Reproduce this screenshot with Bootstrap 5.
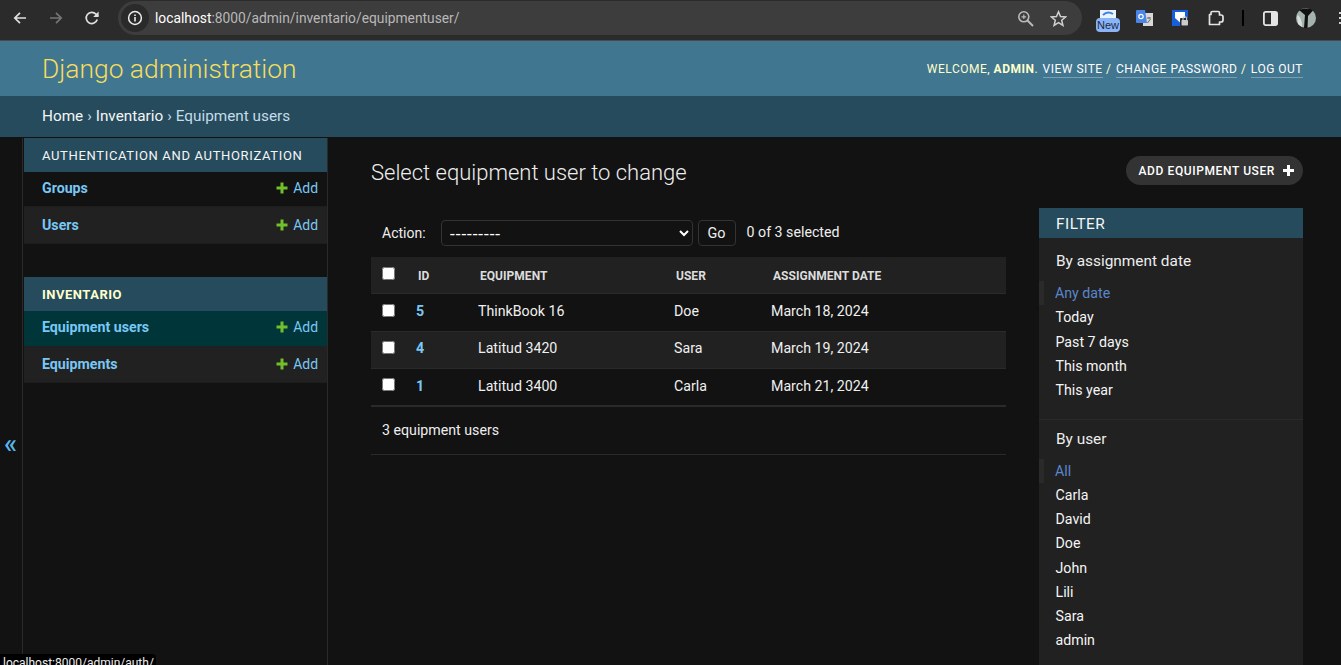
<!doctype html>
<html lang="en">
<head>
<meta charset="utf-8">
<meta name="viewport" content="width=device-width, initial-scale=1">
<title>Select equipment user to change | Django site admin</title>
<link href="https://cdn.jsdelivr.net/npm/bootstrap@5.3.2/dist/css/bootstrap.min.css" rel="stylesheet">
<style>
html, body { height: 665px; overflow: hidden; }
body { background: #121212; color: #eee; font-family: Roboto, "Liberation Sans", sans-serif; font-size: 14.2px; position: relative; }
a { text-decoration: none; }

/* browser bar */
.chrome-bar { height: 41px; background: #2b2b2b; border-bottom: 1px solid #4a4a4a; padding: 0 0 4px 2px; }
.chrome-btn { width: 36px; flex: none; }
.chrome-url { width: 964px; height: 34px; margin-left: 8px; background: #3d3d3d; border-radius: 17px; padding: 0 15px 0 3px; font-size: 13.8px; color: #b8b8b8; flex: none; }
.chrome-info { width: 28px; height: 28px; border-radius: 50%; background: #2a2a2a; margin-right: 6px; }
.chrome-host { color: #fff; }
.chrome-ext { margin-left: 8px; }
.ext-slot { width: 36px; flex: none; }
.ext-new { margin-top: 6px; }
.ext-sep { width: 18px; flex: none; }
.ext-dots { width: 17px; flex: none; }

/* django header */
.dj-header { height: 55px; background: #417690; padding: 1px 38px 0 42px; }
.dj-brand { font-size: 26.4px; font-weight: 300; color: #f5dd5d; line-height: 1; }
.dj-tools { font-size: 12px; font-weight: 400; letter-spacing: .5px; color: #ffc; text-transform: uppercase; margin-top: -1px; }
.dj-tools strong { font-weight: 700; }
.dj-tools a { color: #fff; border-bottom: 1px solid rgba(255,255,255,.3); padding-bottom: 1px; margin-left: 1px; }
.dj-crumbs { height: 41px; background: #264b5d; padding: 0 42px; font-size: 15.3px; color: #c4dce8; }
.dj-crumbs a { color: #f5f5f5; }

/* sidebar */
.dj-main { height: 528px; margin-top: 1px; }
.dj-toggle { width: 23px; flex: none; border-right: 1px solid #2a2a2a; color: #58b6ee; font-size: 27px; font-weight: 500; line-height: 1; padding-top: 293px; padding-left: 4px; }
.dj-side { width: 305px; flex: none; padding-left: 1px; border-right: 1px solid #2a2a2a; }
.dj-module { margin-bottom: 33px; }
.dj-caption { height: 34px; background: #264b5d; padding: 1px 18px 0; font-size: 13px; letter-spacing: .66px; color: #f5f5f5; text-transform: uppercase; font-weight: 400; }
.dj-caption.is-current { color: #ffc; font-weight: 700; letter-spacing: .5px; padding-top: 2px; }
.dj-row { height: 37px; padding: 0 9px 0 18px; border-bottom: 1px solid #1d1d1d; }
.dj-row.first { height: 35px; }
.dj-row.alt { background: #212121; }
.dj-row.current { background: #00363a; border-bottom: 0; padding-bottom: 1px; }
.dj-row .dj-model { color: #79c7f5; font-weight: 700; }
.dj-row.alt .dj-model { margin-top: 2px; }
.dj-add { color: #79c7f5; gap: 5px; font-size: 13.92px; margin-left: auto; }
.dj-row.first .dj-add { margin-top: -2px; }

/* content */
.dj-content { flex: 1; padding: 20px 38px 0 43px; min-width: 0; }
.dj-title { font-size: 22px; font-weight: 300; color: #eee; margin: 0; line-height: 30px; }
.dj-addlink { height: 29px; background: #333; border-radius: 15px; padding: 0 9px 0 13px; font-size: 12px; font-weight: 500; letter-spacing: .6px; color: #fff; text-transform: uppercase; gap: 8px; margin-top: -2px; }
.dj-cols { margin-top: 20px; gap: 33px; }
.dj-list { width: 635px; flex: none; }
.dj-actions { height: 49px; padding: 12px 0 11px 11px; }
.dj-actions label { color: #eee; margin-right: 15px; font-size: 14px; }
.dj-select { width: 252px; height: 26px; background: #121212; border: 1px solid #333; border-radius: 4px; color: #fff; font-family: "Liberation Sans", sans-serif; font-size: 17px; padding: 0 4px; }
.dj-go { height: 26px; width: 38px; background: #121212; border: 1px solid #333; border-radius: 4px; color: #eee; font-size: 14.4px; margin-left: 5px; padding: 1px 0 0; }
.dj-count { margin-left: 11px; font-size: 14.2px; color: #eee; }
.dj-table { margin: 0; --bs-table-bg: transparent; --bs-table-color: #f5f5f5; font-size: 14.2px; table-layout: fixed; }
.dj-table > * > tr > * { border-bottom: 1px solid #2a2a2a; padding: 0; vertical-align: middle; background: transparent; color: #f0f0f0; }
.dj-table thead tr { height: 36px; background: #212121; }
.dj-table thead th { font-size: 12px; font-weight: 700; letter-spacing: .03px; text-transform: uppercase; color: #ddd; }
.dj-table tbody tr { height: 38px; }
.dj-table tbody tr.alt { background: #212121; height: 37px; }
.dj-table > tbody > tr.alt > td { padding-bottom: 1px; }
.dj-table tbody tr:last-child > * { border-bottom: 2px solid #2a2a2a; }
.dj-table > thead > tr > .th-pad { padding: 2px 0 0 2px; }
.dj-table a { color: #79c7f5; font-weight: 700; }
.dj-check { width: 13px; height: 13px; margin: 0 0 4px 11px; display: block; }
.dj-table thead .dj-check { margin-bottom: 2px; }
.dj-foot { height: 48px; padding-left: 11px; border-bottom: 1px solid #2a2a2a; color: #eee; }

/* filter */
.dj-filter { width: 264px; flex: none; background: #212121; height: 470px; }
.dj-filter h2 { height: 30px; margin: 0; background: #264b5d; padding: 3px 17px 0; font-size: 15.4px; font-weight: 400; letter-spacing: .5px; color: #f5f5f5; text-transform: uppercase; }
.dj-group { padding: 13px 0 16.7px; border-bottom: 1px solid #2a2a2a; }
.dj-group + .dj-group { padding-top: 9px; border-bottom: 0; }
.dj-group h3 { margin: 0 0 10.3px; padding-left: 17px; font-size: 15.4px; font-weight: 400; line-height: 20px; color: #eee; }
.dj-group + .dj-group h3 { margin-bottom: 10px; }
.dj-group ul { list-style: none; margin: 0; padding: 0; }
.dj-group li { height: 24.2px; line-height: 24.2px; padding-left: 16.5px; }
.dj-group li a { color: #f5f5f5; }
.dj-group li.selected { border-left: 5px solid #2a2a2a; padding-left: 11px; }
.dj-group li.selected a { color: #5a86cc; }

.status-tip { position: absolute; left: 0; bottom: 0; height: 11px; width: 156px; background: #000; border-top-right-radius: 4px; color: #eee; font-size: 12px; line-height: 19px; padding-left: 3px; overflow: hidden; white-space: nowrap; }
</style>
</head>
<body>
<div class="chrome-bar d-flex align-items-center">
  <div class="chrome-btn d-flex justify-content-center"><svg width="16" height="16" viewBox="0 0 16 16"><path d="M14 8H3M8 2.8 2.8 8 8 13.2" fill="none" stroke="#e0e0e0" stroke-width="1.7"/></svg></div>
  <div class="chrome-btn d-flex justify-content-center"><svg width="16" height="16" viewBox="0 0 16 16"><path d="M2 8H13M8 2.8 13.2 8 8 13.2" fill="none" stroke="#757575" stroke-width="1.7"/></svg></div>
  <div class="chrome-btn d-flex justify-content-center"><svg width="16" height="16" viewBox="0 0 16 16"><path d="M13.2 9.5A5.6 5.6 0 1 1 12 4.2L14 6" fill="none" stroke="#e0e0e0" stroke-width="1.7"/><path d="M14.6 1.6V7H9.2z" fill="#e0e0e0"/></svg></div>
  <div class="chrome-url d-flex align-items-center">
    <span class="chrome-info d-flex align-items-center justify-content-center"><svg width="16" height="16" viewBox="0 0 16 16"><circle cx="8" cy="8" r="6.4" fill="none" stroke="#eee" stroke-width="1.5"/><path d="M8 7v4.4M8 4.4v1.5" stroke="#eee" stroke-width="1.6"/></svg></span>
    <span><span class="chrome-host">localhost</span>:8000/admin/inventario/equipmentuser/</span>
    <span class="ms-auto d-flex align-items-center gap-3">
      <svg width="17" height="17" viewBox="0 0 17 17"><circle cx="6.8" cy="6.8" r="5" fill="none" stroke="#bbb" stroke-width="1.6"/><path d="M10.5 10.5 16 16" stroke="#bbb" stroke-width="1.9"/><path d="M4.5 6.8h4.6M6.8 4.5v4.6" stroke="#bbb" stroke-width="1.2"/></svg>
      <svg width="17" height="17" viewBox="0 0 17 17"><path d="M8.5 1.8 10.5 6.6l5.1.4-3.9 3.3 1.2 5-4.4-2.7-4.4 2.7 1.2-5L1.4 7l5.1-.4z" fill="none" stroke="#d0d0d0" stroke-width="1.5"/></svg>
    </span>
  </div>
  <div class="chrome-ext d-flex align-items-center">
    <div class="ext-slot ext-new d-flex justify-content-center"><svg width="24" height="22" viewBox="0 0 24 22"><rect x="4" y="0" width="16" height="9" fill="#eaf2ff"/><path d="M7 5c3-3 7-3 10-1" fill="none" stroke="#3d82e0" stroke-width="2"/><rect x="0" y="8" width="24" height="14" rx="4" fill="#8ab4f8"/><text x="12" y="19" font-size="11" text-anchor="middle" fill="#1c2a40" font-family="Liberation Sans, sans-serif">New</text></svg></div>
    <div class="ext-slot d-flex justify-content-center"><svg width="17" height="16" viewBox="0 0 17 16"><rect x="7" y="3" width="10" height="13" fill="#d8d8d8"/><path d="M11 8h4M13 7v1.5M11.5 13l3-4" stroke="#666" stroke-width="1" fill="none"/><path d="M1 0h8l2 13H1a1 1 0 0 1-1-1V1a1 1 0 0 1 1-1z" fill="#4a86e8"/><circle cx="5" cy="6.5" r="2.2" fill="none" stroke="#fff" stroke-width="1.2"/></svg></div>
    <div class="ext-slot d-flex justify-content-center"><svg width="17" height="16" viewBox="0 0 17 16"><path d="M0 0h16v11l-7 5H0z" fill="#175ddc"/><path d="M3 2h10v6l-5 4.5L3 8z" fill="#fff"/><rect x="8" y="8" width="9" height="8" rx="1" fill="#2b2b2b"/><rect x="9.5" y="10" width="6.5" height="5.5" rx=".8" fill="#ccc"/><path d="M11 10V8.6a1.8 1.8 0 0 1 3.6 0V10" fill="none" stroke="#ccc" stroke-width="1.1"/></svg></div>
    <div class="ext-slot d-flex justify-content-center"><svg width="17" height="16" viewBox="0 0 17 16"><path d="M1.5 4.5H3V3A1.5 1.5 0 0 1 4.5 1.5H10A1.5 1.5 0 0 1 11.5 3V5H13A2 2 0 0 1 15 7V10A2 2 0 0 1 13 12H11.5V14.5H1.5z" fill="none" stroke="#e4e4e4" stroke-width="1.7" stroke-linejoin="round"/></svg></div>
    <div class="ext-sep d-flex justify-content-center"><svg width="2" height="16" viewBox="0 0 2 16"><rect width="2" height="16" fill="#000"/></svg></div>
    <div class="ext-slot d-flex justify-content-center"><svg width="15" height="15" viewBox="0 0 15 15"><rect x=".9" y=".9" width="13.2" height="13.2" rx="1.8" fill="none" stroke="#e4e4e4" stroke-width="1.8"/><rect x="8" y="1" width="6" height="13" fill="#e4e4e4"/></svg></div>
    <div class="ext-slot d-flex justify-content-center"><svg width="20" height="20" viewBox="0 0 20 20"><circle cx="10" cy="10" r="10" fill="#a5b3ad"/><path d="M3 2 9 7 8 20h3.5L12 8 17 2.5 14 .5h-6z" fill="#111"/><path d="M1 7c3 1 5 5 5 12l-4-3z" fill="#d7dedb"/></svg></div>
    <div class="ext-dots d-flex justify-content-end"><svg width="2" height="14" viewBox="0 0 2 14"><path d="M1 1v2M1 6v2M1 11v2" stroke="#d0d0d0" stroke-width="2"/></svg></div>
  </div>
</div>

<header class="dj-header d-flex align-items-center justify-content-between">
  <div class="dj-brand">Django administration</div>
  <div class="dj-tools">Welcome, <strong>admin</strong>. <a href="#">View site</a> / <a href="#">Change password</a> / <a href="#">Log out</a></div>
</header>
<div class="dj-crumbs d-flex align-items-center gap-1"><a href="#">Home</a> › <a href="#">Inventario</a> › <span>Equipment users</span></div>

<div class="dj-main d-flex">
  <div class="dj-toggle">«</div>
  <nav class="dj-side">
    <div class="dj-module">
      <div class="dj-caption d-flex align-items-center">Authentication and Authorization</div>
      <div class="dj-row first d-flex align-items-center"><a class="dj-model" href="#">Groups</a><a class="dj-add d-flex align-items-center" href="#"><svg width="12" height="12" viewBox="0 0 12 12"><path d="M6 .5v11M.5 6h11" stroke="#70bf2b" stroke-width="3"/></svg>Add</a></div>
      <div class="dj-row alt d-flex align-items-center"><a class="dj-model" href="#">Users</a><a class="dj-add d-flex align-items-center" href="#"><svg width="12" height="12" viewBox="0 0 12 12"><path d="M6 .5v11M.5 6h11" stroke="#70bf2b" stroke-width="3"/></svg>Add</a></div>
    </div>
    <div class="dj-module">
      <div class="dj-caption is-current d-flex align-items-center">Inventario</div>
      <div class="dj-row first current d-flex align-items-center"><a class="dj-model" href="#">Equipment users</a><a class="dj-add d-flex align-items-center" href="#"><svg width="12" height="12" viewBox="0 0 12 12"><path d="M6 .5v11M.5 6h11" stroke="#70bf2b" stroke-width="3"/></svg>Add</a></div>
      <div class="dj-row alt d-flex align-items-center"><a class="dj-model" href="#">Equipments</a><a class="dj-add d-flex align-items-center" href="#"><svg width="12" height="12" viewBox="0 0 12 12"><path d="M6 .5v11M.5 6h11" stroke="#70bf2b" stroke-width="3"/></svg>Add</a></div>
    </div>
  </nav>

  <main class="dj-content">
    <div class="d-flex align-items-start justify-content-between">
      <h1 class="dj-title">Select equipment user to change</h1>
      <a class="dj-addlink d-flex align-items-center" href="#">Add equipment user <svg width="11" height="11" viewBox="0 0 11 11"><path d="M5.5 0v11M0 5.5h11" stroke="#fff" stroke-width="3"/></svg></a>
    </div>
    <div class="dj-cols d-flex align-items-start">
      <div class="dj-list">
        <div class="dj-actions d-flex align-items-center">
          <label>Action:</label>
          <select class="dj-select"><option>---------</option></select>
          <button class="dj-go" type="button">Go</button>
          <span class="dj-count">0 of 3 selected</span>
        </div>
        <table class="table dj-table">
          <colgroup><col style="width:45px"><col style="width:62px"><col style="width:196px"><col style="width:97px"><col></colgroup>
          <thead>
            <tr><th><input class="dj-check" type="checkbox"></th><th class="th-pad">ID</th><th class="th-pad">Equipment</th><th class="th-pad">User</th><th class="th-pad">Assignment date</th></tr>
          </thead>
          <tbody>
            <tr><td><input class="dj-check" type="checkbox"></td><td><a href="#">5</a></td><td>ThinkBook 16</td><td>Doe</td><td>March 18, 2024</td></tr>
            <tr class="alt"><td><input class="dj-check" type="checkbox"></td><td><a href="#">4</a></td><td>Latitud 3420</td><td>Sara</td><td>March 19, 2024</td></tr>
            <tr><td><input class="dj-check" type="checkbox"></td><td><a href="#">1</a></td><td>Latitud 3400</td><td>Carla</td><td>March 21, 2024</td></tr>
          </tbody>
        </table>
        <div class="dj-foot d-flex align-items-center">3 equipment users</div>
      </div>
      <aside class="dj-filter">
        <h2 class="d-flex align-items-center">Filter</h2>
        <div class="dj-group">
          <h3>By assignment date</h3>
          <ul>
            <li class="selected"><a href="#">Any date</a></li>
            <li><a href="#">Today</a></li>
            <li><a href="#">Past 7 days</a></li>
            <li><a href="#">This month</a></li>
            <li><a href="#">This year</a></li>
          </ul>
        </div>
        <div class="dj-group">
          <h3>By user</h3>
          <ul>
            <li class="selected"><a href="#">All</a></li>
            <li><a href="#">Carla</a></li>
            <li><a href="#">David</a></li>
            <li><a href="#">Doe</a></li>
            <li><a href="#">John</a></li>
            <li><a href="#">Lili</a></li>
            <li><a href="#">Sara</a></li>
            <li><a href="#">admin</a></li>
          </ul>
        </div>
      </aside>
    </div>
  </main>
</div>
<div class="status-tip">localhost:8000/admin/auth/</div>
<script src="https://cdn.jsdelivr.net/npm/bootstrap@5.3.2/dist/js/bootstrap.bundle.min.js"></script>
</body>
</html>
